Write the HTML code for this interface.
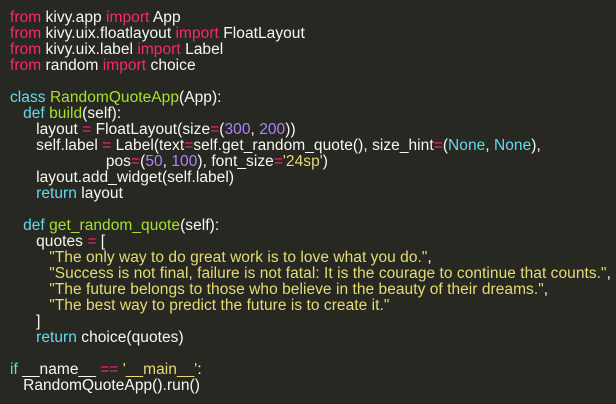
<!DOCTYPE html>
<html><head><meta charset="utf-8"><style>
html,body{margin:0;padding:0;background:#272822;width:616px;height:404px;overflow:hidden}
pre{margin:0;padding:10px 0 0 10px;font-family:"Liberation Sans",sans-serif;font-size:15.5px;line-height:16px;color:#f8f8f2;white-space:pre;letter-spacing:0.05px}
.k{color:#f92672}.c{color:#66d9ef}.g{color:#a6e22e}.s{color:#e6db74}.n{color:#ae81ff}
</style></head><body><pre><span class="k">from</span> kivy.app <span class="k">import</span> App
<span class="k">from</span> kivy.uix.floatlayout <span class="k">import</span> FloatLayout
<span class="k">from</span> kivy.uix.label <span class="k">import</span> Label
<span class="k">from</span> random <span class="k">import</span> choice

<span class="c">class</span> <span class="g">RandomQuoteApp</span>(App):
   <span class="c">def</span> <span class="g">build</span>(self):
      layout <span class="k">=</span> FloatLayout(size<span class="k">=</span>(<span class="n">300</span>, <span class="n">200</span>))
      self.label <span class="k">=</span> Label(text<span class="k">=</span>self.get_random_quote(), size_hint<span class="k">=</span>(<span class="c">None</span>, <span class="c">None</span>),
                      pos<span class="k">=</span>(<span class="n">50</span>, <span class="n">100</span>), font_size<span class="k">=</span><span class="s">'24sp'</span>)
      layout.add_widget(self.label)
      <span class="c">return</span> layout

   <span class="c">def</span> <span class="g">get_random_quote</span>(self):
      quotes <span class="k">=</span> [
         <span class="s">"The only way to do great work is to love what you do."</span>,
         <span class="s">"Success is not final, failure is not fatal: It is the courage to continue that counts."</span>,
         <span class="s">"The future belongs to those who believe in the beauty of their dreams."</span>,
         <span class="s">"The best way to predict the future is to create it."</span>
      ]
      <span class="c">return</span> choice(quotes)

<span class="c">if</span> __name__ <span class="k">==</span> <span class="s">'__main__'</span>:
   RandomQuoteApp().run()</pre></body></html>
